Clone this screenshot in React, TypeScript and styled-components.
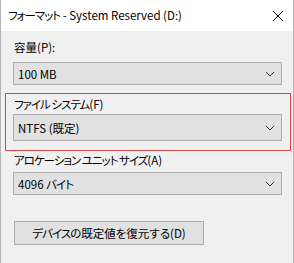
import React from "react";
import styled, { createGlobalStyle } from "styled-components";

const Global = createGlobalStyle`
  html, body { margin: 0; padding: 0; background: #f0f0f0; }
  body {
    font-family: "Noto Sans CJK JP", "Noto Sans", sans-serif;
    font-size: 11.5px;
    color: #000;
    font-feature-settings: "palt" 1;
  }
`;

const Kana = styled.span`
  letter-spacing: -1px;
`;

const Window = styled.div`
  width: 294px;
  height: 263px;
  box-sizing: border-box;
  border-left: 1px solid #b4b4b4;
  border-right: 1px solid #b4b4b4;
  background: #f0f0f0;
  display: flex;
  flex-direction: column;
  overflow: hidden;
`;

const TitleBar = styled.div`
  height: 31px;
  background: #fff;
  display: flex;
  align-items: center;
  justify-content: space-between;
  padding: 0 8px 0 7px;
  flex-shrink: 0;
`;

const Title = styled.span`
  line-height: 16px;
  margin-top: -1px;
`;

const Close = styled.svg`
  width: 12px;
  height: 12px;
  margin-right: 1px;
`;

const Body = styled.div`
  display: flex;
  flex-direction: column;
  padding: 8px 11px 0 12px;
`;

const Label = styled.div`
  line-height: 16px;
  height: 16px;
  padding-left: 1px;
`;

const Combo = styled.div<{ $h?: number }>`
  height: ${(p) => p.$h ?? 23}px;
  box-sizing: border-box;
  border: 1px solid #adadad;
  background: #e1e1e1;
  display: flex;
  align-items: center;
  justify-content: space-between;
  padding: 0 6px 0 4px;
  line-height: 16px;
`;

const Field = styled.div<{ $gap: number; $top?: number }>`
  display: flex;
  flex-direction: column;
  gap: ${(p) => p.$gap}px;
  margin-top: ${(p) => p.$top ?? 0}px;
`;

const Highlight = styled.div`
  margin: 8px -9px 0 -8px;
  border: 1px solid #e04848;
  padding: 2px 8px 9px 7px;
  display: flex;
  flex-direction: column;
  gap: 2px;
`;

const Button = styled.button`
  margin-top: 26px;
  margin-left: 1px;
  width: 190px;
  height: 24px;
  box-sizing: border-box;
  border: 1px solid #adadad;
  background: #e1e1e1;
  font-family: inherit;
  font-size: inherit;
  font-feature-settings: "palt" 1;
  color: #000;
  padding: 0;
  line-height: 16px;
`;

const Chevron = () => (
  <svg width="10" height="6" viewBox="0 0 10 6">
    <path d="M1 1 L5 5 L9 1" fill="none" stroke="#333" strokeWidth="1" />
  </svg>
);

export default function App() {
  return (
    <>
      <Global />
      <Window>
        <TitleBar>
          <Title>
            <Kana>フォーマット</Kana> - System Reserved (D:)
          </Title>
          <Close viewBox="0 0 12 12">
            <path d="M1 1 L11 11 M11 1 L1 11" stroke="#000" strokeWidth="1" />
          </Close>
        </TitleBar>
        <Body>
          <Field $gap={7}>
            <Label>容量(P):</Label>
            <Combo>
              <span>100 MB</span>
              <Chevron />
            </Combo>
          </Field>
          <Highlight>
            <Label>
              <Kana>ファイル システム</Kana>(F)
            </Label>
            <Combo $h={27}>
              <span>NTFS (既定)</span>
              <Chevron />
            </Combo>
          </Highlight>
          <Field $gap={4} $top={1}>
            <Label>
              <Kana>アロケーション ユニット サイズ</Kana>(A)
            </Label>
            <Combo>
              <span>
                4096 <Kana>バイト</Kana>
              </span>
              <Chevron />
            </Combo>
          </Field>
          <Button>
            <Kana>デバイス</Kana>の既定値を復元する(D)
          </Button>
        </Body>
      </Window>
    </>
  );
}
